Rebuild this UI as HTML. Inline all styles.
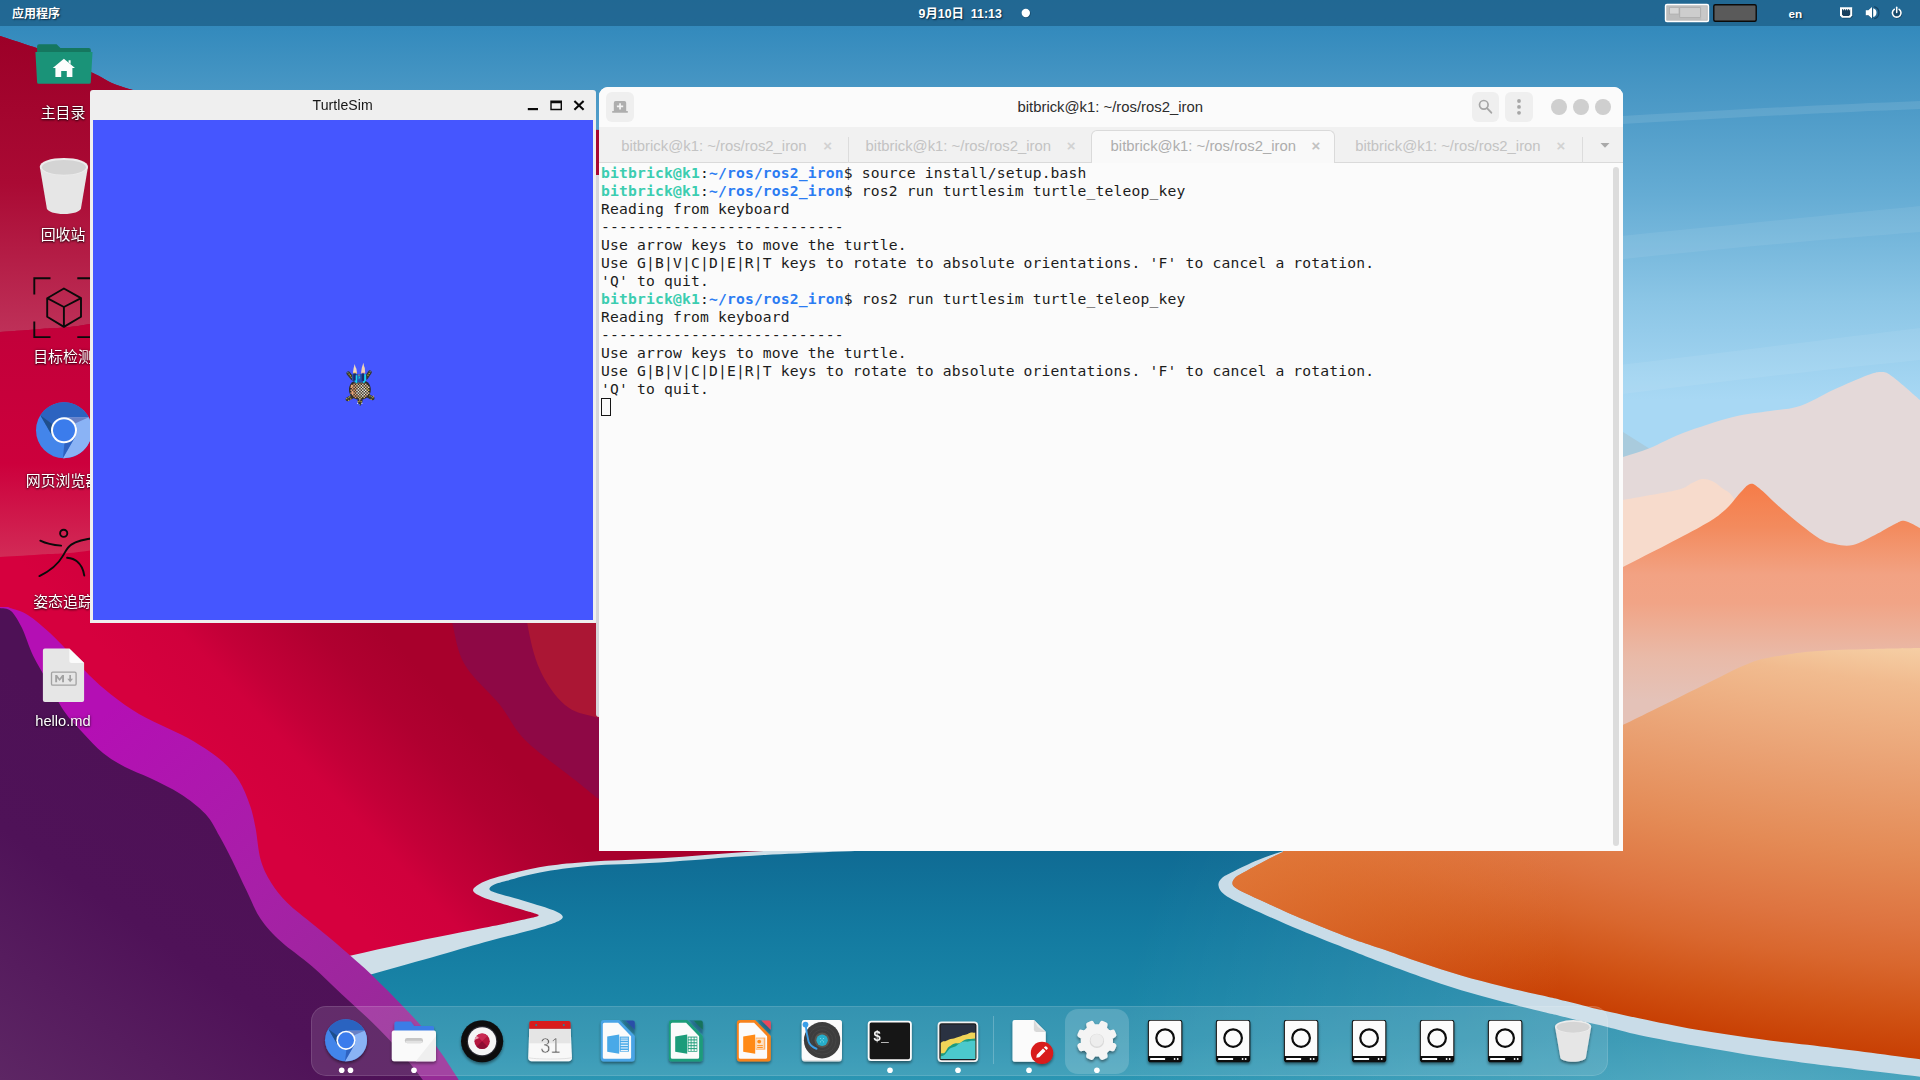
<!DOCTYPE html>
<html lang="zh-CN">
<head>
<meta charset="utf-8">
<title>Desktop</title>
<style>
html,body{margin:0;padding:0;}
body{width:1920px;height:1080px;overflow:hidden;position:relative;background:#358bbd;font-family:"Liberation Sans","Noto Sans CJK SC",sans-serif;}
.abs{position:absolute;}
#wall{position:absolute;left:0;top:0;width:1920px;height:1080px;display:block;}
/* top panel */
#panel{position:absolute;left:0;top:0;width:1920px;height:26px;background:rgba(32,100,142,0.88);color:#fff;font-weight:bold;font-size:12px;text-shadow:1px 1px 1.5px rgba(5,30,50,.85);}
#panel .t{position:absolute;top:2.400px;line-height:25px;white-space:nowrap;}
/* desktop icons */
.dlabel{will-change:transform;position:absolute;width:140px;text-align:center;color:#fff;font-size:14.900px;line-height:20px;white-space:nowrap;text-shadow:0 1px 2px rgba(0,0,0,.8),0 0 3px rgba(0,0,0,.45);}
/* turtlesim */
#tsim{position:absolute;left:90px;top:90px;width:506px;height:533px;background:#efefef;border-radius:3px 3px 0 0;overflow:hidden;}
#tsim .title{position:absolute;left:0;top:0;width:506px;height:30px;line-height:31px;font-size:14.100px;letter-spacing:0.050px;color:#161616;white-space:nowrap;}
#tsim .canvas{position:absolute;left:3px;top:30px;width:500px;height:500px;background:#4556ff;}
/* terminal */
#term{position:absolute;left:599px;top:87px;width:1024px;height:764px;background:#fbfbfb;border-radius:9px 9px 0 0;overflow:hidden;}
#term .hdr{position:absolute;left:0;top:0;width:1024px;height:40px;background:#fbfbfb;}
#term .hb{background:#efefef;border-radius:6px;}
#term .ttl{font-size:14.850px;line-height:40px;color:#2c2c2c;white-space:nowrap;}
#term .wc{width:15.800px;height:15.800px;border-radius:50%;background:#cfcfcf;}
#term .tabs{position:absolute;left:0;top:40px;width:1024px;height:36px;background:#f1f1f1;border-bottom:1px solid #dadada;box-sizing:border-box;}
#term .tt{top:0;line-height:39px;font-size:14.850px;color:#c3c3c3;white-space:nowrap;}
#term .tx{top:0;line-height:38px;font-size:15px;font-weight:bold;color:#d2d2d2;}
#term .tsep{top:10px;width:1px;height:26px;background:#dcdcdc;}
#term .atab{background:#f9f9f9;border:1px solid #dadada;border-bottom:none;border-radius:6px 6px 0 0;box-sizing:border-box;}
#term .body{position:absolute;left:0;top:76px;width:1024px;height:688px;background:#fbfbfb;}
#term pre{position:absolute;left:2px;top:1px;margin:0;font-family:"DejaVu Sans Mono","Liberation Mono",monospace;font-size:14.670px;line-height:18px;letter-spacing:0.168px;color:#1c1c1c;}
.g{color:#3ccdb0;font-weight:bold;}
.b{color:#2b7cf2;font-weight:bold;}
/* dock */
#dock{position:absolute;left:311px;top:1006px;width:1297px;height:70px;border-radius:15px;background:rgba(255,255,255,0.115);box-shadow:inset 0 0 0 1px rgba(255,255,255,0.12);}
</style>
</head>
<body>
<svg id="wall" viewBox="0 0 1920 1080" width="1920" height="1080">
<defs>
<linearGradient id="sky" x1="0" y1="0" x2="0" y2="1080" gradientUnits="userSpaceOnUse"><stop offset="0" stop-color="#2f82b5"/><stop offset="0.03" stop-color="#358bbd"/><stop offset="0.08" stop-color="#4796c4"/><stop offset="0.18" stop-color="#65acd4"/><stop offset="0.28" stop-color="#8cc6e6"/><stop offset="0.37" stop-color="#a8d8f4"/><stop offset="1" stop-color="#a8d8f4"/></linearGradient>
<linearGradient id="gpeak" x1="0" y1="484" x2="0" y2="700" gradientUnits="userSpaceOnUse"><stop offset="0" stop-color="#f67c48"/><stop offset="0.2" stop-color="#f38b5e"/><stop offset="0.42" stop-color="#f2a283"/><stop offset="0.55" stop-color="#f1a486"/><stop offset="0.8" stop-color="#e9baa8"/><stop offset="1" stop-color="#e4c2b8"/></linearGradient>
<radialGradient id="gdune" cx="2112" cy="-1354" r="2418" gradientUnits="userSpaceOnUse"><stop offset="0.8305" stop-color="#f6d0a6"/><stop offset="0.847" stop-color="#f1bb8f"/><stop offset="0.8821" stop-color="#eaa274"/><stop offset="0.9173" stop-color="#e48b56"/><stop offset="0.9462" stop-color="#de7440"/><stop offset="0.9628" stop-color="#d9672e"/><stop offset="0.9835" stop-color="#d05214"/><stop offset="1" stop-color="#c84004"/></radialGradient>
<linearGradient id="gdtip" x1="1230" y1="0" x2="1560" y2="0" gradientUnits="userSpaceOnUse"><stop offset="0" stop-color="#e88848" stop-opacity="0.7"/><stop offset="1" stop-color="#e88848" stop-opacity="0"/></linearGradient>
<linearGradient id="gwater" x1="0" y1="845" x2="0" y2="1080" gradientUnits="userSpaceOnUse"><stop offset="0" stop-color="#0f6a93"/><stop offset="0.36" stop-color="#137aa0"/><stop offset="0.66" stop-color="#1a85a7"/><stop offset="0.83" stop-color="#208cab"/><stop offset="1" stop-color="#2c96b3"/></linearGradient>
<radialGradient id="gwl" cx="1750" cy="1120" r="640" gradientUnits="userSpaceOnUse"><stop offset="0" stop-color="#fff" stop-opacity="0.18"/><stop offset="0.5" stop-color="#fff" stop-opacity="0.09"/><stop offset="1" stop-color="#fff" stop-opacity="0"/></radialGradient>
<linearGradient id="gred" x1="150" y1="701.6" x2="310.6" y2="551.3" gradientUnits="userSpaceOnUse"><stop offset="0" stop-color="#d6003e"/><stop offset="0.318" stop-color="#d0003c"/><stop offset="0.4545" stop-color="#c40038"/><stop offset="0.773" stop-color="#b00030"/><stop offset="1" stop-color="#a8002c"/></linearGradient>
<linearGradient id="gred1" x1="0" y1="36" x2="0" y2="330" gradientUnits="userSpaceOnUse"><stop offset="0" stop-color="#9c0028"/><stop offset="0.5" stop-color="#aa0a34"/><stop offset="1" stop-color="#be3058"/></linearGradient>
<linearGradient id="gred2" x1="0" y1="325" x2="0" y2="556" gradientUnits="userSpaceOnUse"><stop offset="0" stop-color="#c2003a"/><stop offset="0.6" stop-color="#cc003c"/><stop offset="1" stop-color="#d22a56"/></linearGradient>
<linearGradient id="gmag" x1="120" y1="700" x2="420" y2="1040" gradientUnits="userSpaceOnUse"><stop offset="0" stop-color="#b40fb4"/><stop offset="0.5" stop-color="#a81fa8"/><stop offset="1" stop-color="#962c96"/></linearGradient>
<linearGradient id="gpur" x1="0" y1="1080" x2="200" y2="800" gradientUnits="userSpaceOnUse"><stop offset="0" stop-color="#5d2664"/><stop offset="0.6" stop-color="#4f1258"/><stop offset="1" stop-color="#4e1156"/></linearGradient>
</defs>
<rect width="1920" height="1080" fill="url(#sky)"/>
<path d="M1560,120 C1700,111 1820,105 1920,101 L1920,109 C1820,113 1700,119 1560,128 Z" fill="#ffffff" opacity="0.10"/>
<path d="M1560,242 C1700,228 1820,216 1920,206 L1920,232 C1820,240 1700,250 1560,266 Z" fill="#ffffff" opacity="0.07"/>
<path d="M1560,372 C1700,356 1820,340 1920,328 L1920,360 C1820,370 1700,384 1560,402 Z" fill="#ffffff" opacity="0.07"/>
<path d="M1600,432 L1623,432 L1650,449 L1600,470 Z" fill="#a9cbdd"/>
<path d="M1560.0,475.0 C1566.7,473.3 1589.5,468.0 1600.0,465.0 C1610.5,462.0 1614.7,459.8 1623.0,457.0 C1631.3,454.2 1640.0,452.0 1650.0,448.0 C1660.0,444.0 1669.2,438.2 1683.0,433.0 C1696.8,427.8 1718.5,420.7 1733.0,417.0 C1747.5,413.3 1758.8,412.8 1770.0,411.0 C1781.2,409.2 1789.5,409.5 1800.0,406.0 C1810.5,402.5 1821.7,395.2 1833.0,390.0 C1844.3,384.8 1859.8,378.0 1868.0,375.0 C1876.2,372.0 1877.8,371.7 1882.0,372.0 C1886.2,372.3 1886.7,372.3 1893.0,377.0 C1899.3,381.7 1915.5,396.2 1920.0,400.0 L1920.0,720.0 L1560.0,720.0 Z" fill="#e4d9d9"/>
<path d="M1560.0,512.0 C1566.7,510.8 1589.5,507.0 1600.0,505.0 C1610.5,503.0 1610.2,502.5 1623.0,500.0 C1635.8,497.5 1665.5,492.8 1677.0,490.0 C1688.5,487.2 1687.8,484.8 1692.0,483.0 C1696.2,481.2 1698.7,479.3 1702.0,479.0 C1705.3,478.7 1708.7,479.5 1712.0,481.0 C1715.3,482.5 1718.0,484.5 1722.0,488.0 C1726.0,491.5 1729.7,490.0 1736.0,502.0 C1742.3,514.0 1756.0,550.3 1760.0,560.0 L1560.0,600.0 Z" fill="#f7dbcc"/>
<path d="M1560.0,598.0 C1566.7,594.7 1589.5,583.2 1600.0,578.0 C1610.5,572.8 1606.3,575.5 1623.0,567.0 C1639.7,558.5 1683.0,536.5 1700.0,527.0 C1717.0,517.5 1718.3,515.7 1725.0,510.0 C1731.7,504.3 1735.8,497.3 1740.0,493.0 C1744.2,488.7 1746.8,484.8 1750.0,484.0 C1753.2,483.2 1753.5,483.7 1759.0,488.0 C1764.5,492.3 1773.3,501.8 1783.0,510.0 C1792.7,518.2 1808.3,531.3 1817.0,537.0 C1825.7,542.7 1829.0,542.7 1835.0,544.0 C1841.0,545.3 1846.3,546.5 1853.0,545.0 C1859.7,543.5 1868.0,538.5 1875.0,535.0 C1882.0,531.5 1890.0,526.3 1895.0,524.0 C1900.0,521.7 1900.8,520.3 1905.0,521.0 C1909.2,521.7 1917.5,526.8 1920.0,528.0 L1920.0,760.0 L1560.0,760.0 Z" fill="url(#gpeak)"/>
<rect x="300" y="830" width="1620" height="250" fill="url(#gwater)"/>
<rect x="900" y="830" width="1020" height="250" fill="url(#gwl)"/>
<path d="M300.0,994.0 C311.9,990.7 348.4,980.7 371.7,974.2 C395.0,967.7 420.3,960.6 440.0,955.0 C459.7,949.4 474.7,945.0 490.0,940.8 C505.3,936.6 521.2,932.9 531.7,930.0 C542.2,927.1 548.4,925.0 553.3,923.3 C558.2,921.5 559.5,920.7 561.0,919.5 C562.5,918.3 563.2,917.3 562.5,916.0 C561.8,914.7 560.5,913.4 556.7,911.7 C553.0,910.0 547.0,908.0 540.0,905.8 C533.0,903.6 522.5,900.5 515.0,898.3 C507.5,896.1 499.2,894.0 495.0,892.5 C490.8,891.0 489.8,890.5 489.5,889.2 C489.2,888.0 490.4,886.4 493.3,885.0 C496.2,883.6 498.9,882.9 506.7,880.8 C514.5,878.7 526.1,875.0 540.0,872.5 C553.9,870.0 570.0,867.5 590.0,865.8 C610.0,864.1 630.8,864.3 660.0,862.5 C689.2,860.7 725.0,857.2 765.0,855.0 C805.0,852.8 860.8,850.7 900.0,849.5 C939.2,848.3 983.3,848.2 1000.0,848.0 L1000.0,600.0 L300.0,600.0 Z" fill="#cfdfe8"/>
<path d="M0.0,36.0 C8.3,38.8 34.5,46.8 50.0,53.0 C65.5,59.2 79.2,66.8 93.0,73.0 C106.8,79.2 106.8,83.0 133.0,90.0 C159.2,97.0 205.5,108.8 250.0,115.0 C294.5,121.2 341.7,124.5 400.0,127.0 C458.3,129.5 550.0,128.7 600.0,130.0 C650.0,131.3 683.3,134.2 700.0,135.0 L1000,135 L1000.0,844.0 C983.3,844.3 939.2,844.8 900.0,846.0 C860.8,847.2 805.0,849.0 765.0,851.0 C725.0,853.0 689.2,856.5 660.0,858.3 C630.8,860.1 608.6,860.5 590.0,861.7 C571.4,863.0 560.8,864.0 548.3,865.8 C535.8,867.6 524.7,870.3 515.0,872.5 C505.3,874.7 496.4,877.0 490.0,879.2 C483.6,881.4 479.5,883.8 476.7,885.8 C473.9,887.8 472.5,889.4 473.3,891.2 C474.1,893.0 477.5,894.8 481.7,896.7 C485.9,898.6 491.4,900.3 498.3,902.5 C505.2,904.7 517.2,908.2 523.3,910.0 C529.4,911.8 532.5,912.6 535.0,913.5 C537.5,914.4 539.1,914.7 538.6,915.4 C538.1,916.1 537.0,916.5 531.7,917.8 C526.4,919.1 516.4,921.3 506.7,923.3 C497.0,925.3 490.0,926.7 473.3,930.0 C456.6,933.3 427.2,939.0 406.7,943.3 C386.1,947.6 367.8,951.8 350.0,955.8 C332.2,959.8 308.3,965.1 300.0,967.0 L0.0,1080.0 L0.0,36.0 Z" fill="url(#gred)"/>
<path d="M0.0,36.0 C8.3,38.8 34.5,46.8 50.0,53.0 C65.5,59.2 79.2,66.8 93.0,73.0 C106.8,79.2 106.8,83.0 133.0,90.0 C159.2,97.0 205.5,108.8 250.0,115.0 C294.5,121.2 341.7,124.5 400.0,127.0 C458.3,129.5 550.0,128.7 600.0,130.0 C650.0,131.3 683.3,134.2 700.0,135.0 L700,170 L600.0,190.0 C566.7,198.3 466.7,221.7 400.0,240.0 C333.3,258.3 251.7,286.0 200.0,300.0 C148.3,314.0 116.7,319.2 90.0,324.0 C63.3,328.8 55.0,327.7 40.0,329.0 C25.0,330.3 6.7,331.5 0.0,332.0 Z" fill="url(#gred1)"/>
<path d="M0.0,332.0 C6.7,331.5 25.0,330.3 40.0,329.0 C55.0,327.7 63.3,328.8 90.0,324.0 C116.7,319.2 148.3,314.0 200.0,300.0 C251.7,286.0 366.7,250.0 400.0,240.0 L400.0,480.0 C366.7,488.3 251.7,518.2 200.0,530.0 C148.3,541.8 116.7,546.4 90.0,550.5 C63.3,554.6 55.0,553.4 40.0,554.5 C25.0,555.6 6.7,556.6 0.0,557.0 Z" fill="url(#gred2)"/>
<path d="M440.0,560.0 C442.0,570.3 447.8,604.5 452.0,622.0 C456.2,639.5 457.0,651.2 465.0,665.0 C473.0,678.8 490.0,692.5 500.0,705.0 C510.0,717.5 512.5,727.5 525.0,740.0 C537.5,752.5 562.5,770.0 575.0,780.0 C587.5,790.0 589.2,791.7 600.0,800.0 C610.8,808.3 633.3,825.0 640.0,830.0 L700.0,560.0 Z" fill="#8e0845"/>
<path d="M520.0,560.0 C521.2,570.3 523.7,603.7 527.0,622.0 C530.3,640.3 533.7,656.2 540.0,670.0 C546.3,683.8 555.8,697.2 565.0,705.0 C574.2,712.8 582.5,713.7 595.0,717.0 C607.5,720.3 632.5,723.7 640.0,725.0 L700.0,560.0 Z" fill="#ab1634"/>
<path d="M1920.0,1076.7 C1904.7,1074.9 1854.2,1069.1 1828.0,1065.8 C1801.8,1062.5 1784.3,1060.3 1762.5,1057.0 C1740.7,1053.7 1717.4,1049.6 1697.0,1046.0 C1676.6,1042.4 1655.0,1038.4 1640.0,1035.2 C1625.0,1032.0 1616.8,1029.3 1607.3,1027.0 C1597.8,1024.7 1591.0,1023.5 1583.1,1021.6 C1575.2,1019.8 1566.8,1017.5 1560.0,1015.9 C1553.2,1014.3 1552.2,1014.2 1542.5,1011.8 C1532.8,1009.4 1515.5,1005.2 1501.9,1001.6 C1488.4,998.0 1474.8,994.4 1461.2,990.3 C1447.7,986.1 1434.1,981.5 1420.6,976.7 C1407.1,972.0 1391.8,966.2 1380.0,961.8 C1368.2,957.3 1363.3,955.3 1350.0,950.0 C1336.7,944.7 1316.7,937.0 1300.0,930.0 C1283.3,923.0 1262.5,913.8 1250.0,908.0 C1237.5,902.2 1230.2,898.8 1225.0,895.0 C1219.8,891.2 1219.0,888.3 1218.5,885.5 C1218.0,882.7 1219.6,880.3 1222.0,878.0 C1224.4,875.7 1227.0,874.7 1233.0,871.7 C1239.0,868.7 1249.7,863.4 1258.0,860.0 C1266.3,856.6 1274.3,854.1 1283.0,851.3 C1291.7,848.5 1305.5,844.4 1310.0,843.0 L1920.0,843.0 Z" fill="#c9dce8"/>
<path d="M1283.0,851.0 C1302.5,843.3 1363.8,818.5 1400.0,805.0 C1436.2,791.5 1466.7,781.7 1500.0,770.0 C1533.3,758.3 1578.8,742.8 1600.0,735.0 C1621.2,727.2 1610.3,731.0 1627.0,723.0 C1643.7,715.0 1679.5,697.0 1700.0,687.0 C1720.5,677.0 1735.8,668.3 1750.0,663.0 C1764.2,657.7 1773.8,657.0 1785.0,655.0 C1796.2,653.0 1802.8,652.0 1817.0,651.0 C1831.2,650.0 1852.8,649.5 1870.0,649.0 C1887.2,648.5 1911.7,648.2 1920.0,648.0 L1920.0,1059.2 C1904.7,1057.2 1854.2,1050.5 1828.0,1047.2 C1801.8,1043.9 1784.3,1042.4 1762.5,1039.5 C1740.7,1036.6 1717.4,1033.2 1697.0,1029.7 C1676.6,1026.2 1656.3,1021.8 1640.0,1018.4 C1623.7,1015.0 1608.4,1011.6 1598.9,1009.4 C1589.4,1007.2 1589.6,1007.0 1583.1,1005.4 C1576.6,1003.8 1566.8,1001.3 1560.0,999.7 C1553.2,998.1 1552.2,997.9 1542.5,995.6 C1532.8,993.4 1515.5,989.6 1501.9,986.2 C1488.4,982.8 1474.8,979.4 1461.2,975.4 C1447.7,971.4 1434.1,967.0 1420.6,962.5 C1407.1,958.0 1391.8,952.4 1380.0,948.3 C1368.2,944.2 1363.3,943.0 1350.0,938.0 C1336.7,933.0 1313.9,923.8 1300.0,918.0 C1286.1,912.2 1275.9,907.2 1266.7,903.0 C1257.5,898.8 1250.4,895.7 1245.0,893.0 C1239.6,890.3 1236.6,888.8 1234.5,887.0 C1232.4,885.2 1232.4,884.0 1232.5,882.5 C1232.6,881.0 1233.5,879.5 1235.0,878.0 C1236.5,876.5 1236.4,876.5 1241.7,873.5 C1247.0,870.5 1259.8,863.6 1266.7,860.0 C1273.6,856.4 1280.3,853.3 1283.0,852.0 Z" fill="url(#gdune)"/>
<path d="M1283.0,851.0 C1302.5,843.3 1363.8,818.5 1400.0,805.0 C1436.2,791.5 1466.7,781.7 1500.0,770.0 C1533.3,758.3 1578.8,742.8 1600.0,735.0 C1621.2,727.2 1610.3,731.0 1627.0,723.0 C1643.7,715.0 1679.5,697.0 1700.0,687.0 C1720.5,677.0 1735.8,668.3 1750.0,663.0 C1764.2,657.7 1773.8,657.0 1785.0,655.0 C1796.2,653.0 1802.8,652.0 1817.0,651.0 C1831.2,650.0 1852.8,649.5 1870.0,649.0 C1887.2,648.5 1911.7,648.2 1920.0,648.0 L1920.0,1059.2 C1904.7,1057.2 1854.2,1050.5 1828.0,1047.2 C1801.8,1043.9 1784.3,1042.4 1762.5,1039.5 C1740.7,1036.6 1717.4,1033.2 1697.0,1029.7 C1676.6,1026.2 1656.3,1021.8 1640.0,1018.4 C1623.7,1015.0 1608.4,1011.6 1598.9,1009.4 C1589.4,1007.2 1589.6,1007.0 1583.1,1005.4 C1576.6,1003.8 1566.8,1001.3 1560.0,999.7 C1553.2,998.1 1552.2,997.9 1542.5,995.6 C1532.8,993.4 1515.5,989.6 1501.9,986.2 C1488.4,982.8 1474.8,979.4 1461.2,975.4 C1447.7,971.4 1434.1,967.0 1420.6,962.5 C1407.1,958.0 1391.8,952.4 1380.0,948.3 C1368.2,944.2 1363.3,943.0 1350.0,938.0 C1336.7,933.0 1313.9,923.8 1300.0,918.0 C1286.1,912.2 1275.9,907.2 1266.7,903.0 C1257.5,898.8 1250.4,895.7 1245.0,893.0 C1239.6,890.3 1236.6,888.8 1234.5,887.0 C1232.4,885.2 1232.4,884.0 1232.5,882.5 C1232.6,881.0 1233.5,879.5 1235.0,878.0 C1236.5,876.5 1236.4,876.5 1241.7,873.5 C1247.0,870.5 1259.8,863.6 1266.7,860.0 C1273.6,856.4 1280.3,853.3 1283.0,852.0 Z" fill="url(#gdtip)"/>
<path d="M8.0,607.0 C8.5,607.2 7.7,607.0 11.0,608.3 C14.3,609.6 21.3,610.9 27.8,615.0 C34.3,619.1 42.6,626.2 50.0,633.0 C57.4,639.8 65.5,648.5 72.0,655.5 C78.5,662.5 82.5,668.5 89.0,675.0 C95.5,681.5 102.7,687.9 111.0,694.4 C119.3,700.9 129.7,708.4 139.0,714.0 C148.3,719.6 157.5,723.2 166.7,727.8 C175.9,732.4 185.2,736.2 194.4,741.7 C203.6,747.2 214.6,754.5 222.0,761.0 C229.4,767.5 234.3,773.1 239.0,780.5 C243.7,787.9 247.2,797.6 250.0,805.5 C252.8,813.4 253.7,818.7 255.5,827.8 C257.3,836.9 258.1,850.9 260.7,860.0 C263.3,869.1 266.6,875.3 271.0,882.4 C275.4,889.5 280.4,896.0 287.2,902.8 C294.0,909.6 303.9,916.8 311.7,923.2 C319.5,929.7 327.6,936.1 334.0,941.5 C340.4,946.9 344.3,950.4 350.4,955.8 C356.5,961.2 362.0,965.5 370.8,974.0 C379.6,982.5 394.6,997.5 403.4,1006.7 C412.2,1015.9 417.3,1021.2 423.7,1029.0 C430.1,1036.8 435.4,1044.8 441.5,1053.6 C447.6,1062.4 456.9,1077.3 460.0,1082.0 L0.0,1082.0 L0.0,607.0 Z" fill="url(#gmag)"/>
<path d="M0.0,608.0 C1.8,608.5 7.3,607.7 11.0,611.0 C14.7,614.3 18.3,620.6 22.0,628.0 C25.7,635.4 28.8,646.8 33.0,655.5 C37.2,664.2 41.8,671.2 47.0,680.5 C52.2,689.8 58.0,702.2 64.0,711.0 C70.0,719.8 76.5,726.0 83.0,733.0 C89.5,740.0 96.0,747.3 103.0,753.0 C110.0,758.7 117.2,762.8 125.0,767.0 C132.8,771.2 140.8,773.5 150.0,778.0 C159.2,782.5 171.2,788.0 180.5,794.0 C189.8,800.0 199.0,807.0 205.5,814.0 C212.0,821.0 215.0,828.3 219.4,836.0 C223.8,843.7 227.5,850.9 232.0,860.0 C236.5,869.1 241.7,880.8 246.5,890.6 C251.3,900.4 254.9,910.5 260.7,919.0 C266.4,927.5 272.5,933.7 281.0,941.5 C289.5,949.3 301.5,957.2 311.7,966.0 C321.9,974.8 331.8,985.0 342.0,994.5 C352.2,1004.0 362.8,1013.1 372.8,1023.0 C382.8,1032.8 393.2,1043.8 401.8,1053.6 C410.4,1063.4 420.7,1077.3 424.5,1082.0 L0.0,1082.0 Z" fill="url(#gpur)"/>
</svg>
<!-- ===== top panel ===== -->
<div id="panel">
<span class="t" style="left:12px;">应用程序</span>
<span class="t" style="left:918.500px;font-size:12.400px;">9月10日&nbsp; 11:13</span>
<span class="t" style="left:1788.600px;font-size:11.700px;top:0.500px;">en</span>
<svg class="abs" style="left:1018px;top:5px" width="16" height="16" viewBox="0 0 16 16"><circle cx="8.300" cy="8.600" r="4.500" fill="#0d2f48" opacity=".5"/><circle cx="7.800" cy="8" r="4.200" fill="#fff"/></svg>
<!-- workspace switcher -->
<svg class="abs" style="left:1660px;top:0" width="110" height="26" viewBox="1660 0 110 26">
<rect x="1665.5" y="4.5" width="43" height="17" rx="1.5" fill="#bcbcbc" stroke="#fff" stroke-width="1.4"/>
<rect x="1669.7" y="7.7" width="9.3" height="6.3" fill="#d6d6d6" stroke="#a8a8a8" stroke-width=".6"/>
<rect x="1679.8" y="7.7" width="20.8" height="9.9" fill="#cdcdcd" stroke="#a4a4a4" stroke-width=".6"/>
<rect x="1701.2" y="6.2" width="5.5" height="13.6" fill="#c8c8c8"/>
<rect x="1713.8" y="4.7" width="42.4" height="16.6" rx="1.5" fill="#5a5a5a" stroke="#0a0a0a" stroke-width="1.4"/>
</svg>
<!-- network / volume / power -->
<svg class="abs" style="left:1836px;top:0" width="72" height="26" viewBox="1836 0 72 26">
<g fill="#0d2f48" opacity=".55" transform="translate(.6,.9)">
<path d="M1840,7.3h12.2v8.2l-2,2.2h-8.2l-2,-2.2z"/><path d="M1865.8,10.2h2.6l3.6,-3.2v11.4l-3.6,-3.2h-2.6z"/><circle cx="1896.7" cy="12.9" r="4.9"/>
</g>
<path d="M1840,7.3h12.2v8.2l-2,2.2h-8.2l-2,-2.2z" fill="#fff"/>
<path d="M1842,9.2h1l.5,1.5.5,-1.5h1l.5,1.5.5,-1.5h1l.5,1.5.5,-1.5h1l.5,1.5.5,-1.5h.2v5.6l-1.3,1.3h-5.6l-1.3,-1.3z" fill="#17405f"/>
<path d="M1865.8,10.2h2.6l3.6,-3.2v11.4l-3.6,-3.2h-2.6z" fill="#fff"/>
<path d="M1873.2,8.3a4.6,4.6 0 0 1 0,8.8z" fill="#fff"/>
<path d="M1874.2,6.6a6.3,6.3 0 0 1 0,12.2" fill="none" stroke="#123a58" stroke-width="1.1" opacity=".8"/>
<path d="M1894.3,9.3a4.3,4.3 0 1 0 4.8,0" fill="none" stroke="#fff" stroke-width="1.6" stroke-linecap="round"/>
<path d="M1896.7,7.2v5.3" stroke="#fff" stroke-width="1.5" stroke-linecap="round"/>
</svg>
</div>

<!-- ===== desktop icons ===== -->
<svg class="abs" style="left:20px;top:36px" width="90" height="680" viewBox="20 36 90 680">
<!-- home folder -->
<path d="M37.1,46.2a2,2 0 0 1 2,-2h17.5l3.8,3.7h28.4a2,2 0 0 1 2,2v8h-53.7z" fill="#15775f"/>
<path d="M35.4,52.1h57.1l-1.7,30.1a1.6,1.6 0 0 1 -1.6,1.5h-50.5a1.6,1.6 0 0 1 -1.6,-1.5z" fill="#1a9378"/>
<path d="M63.9,58.7l11.1,9.4h-2.6v8.9h-5.6v-6h-5.6v6h-5.8v-8.9h-2.6zM68.6,60.3h2v3.6l-2,-1.7z" fill="#fdfdfd"/>
<!-- trash -->
<path d="M39.8,166.7l7,41.5c0.6,3.4 8,5.8 17.1,5.8s16.5,-2.4 17.1,-5.8l7,-41.5z" fill="#e6e6e6"/>
<ellipse cx="63.9" cy="166.7" rx="24.1" ry="8.8" fill="#ececec"/>
<ellipse cx="63.9" cy="167.3" rx="22" ry="7.4" fill="#d4d4d4"/>
<!-- object detection -->
<g fill="none" stroke="#0a0a0a" stroke-width="1.900" stroke-linejoin="miter">
<path d="M50.5,278.3h-16.2v16.2M34.3,321.4v15.7h16.2M77.3,278.3h16.2v16.2M93.5,321.4v15.7h-16.2"/>
<path d="M63.9,288.5l17.1,9.7v18.6l-17.1,10.1l-16.7,-10.1v-18.6zM47.2,298.2l16.7,8.8l17.1,-8.8M63.9,307v19.9" stroke-linejoin="round"/>
</g>
<!-- pose -->
<g fill="none" stroke="#0a0a0a" stroke-width="1.900" stroke-linecap="round">
<circle cx="63.7" cy="533.3" r="3.6"/>
<path d="M40.3,540.7c6,3 13,4.4 20.8,4.9"/>
<path d="M96,537.8c-10,1.2 -19,3 -24.7,6.8c-4.5,3 -6,7.500 -8.6,11.5c-4.500,8 -12,14.500 -23.300,20"/>
<path d="M67.1,557.8c4,0.500 7.500,1.500 9.800,3.500c4.500,3.700 6.500,8.500 7.400,14.300"/>
</g>
<!-- hello.md -->
<path d="M44.9,648.5h24.4l14.800,14.600v36.800a2,2 0 0 1 -2,2h-37.200a2,2 0 0 1 -2,-2v-49.400a2,2 0 0 1 2,-2z" fill="#e6e6e6"/>
<path d="M69.3,648.5l14.800,14.600h-12.300a2.500,2.500 0 0 1 -2.500,-2.500z" fill="#fbfbfb"/>
<rect x="51.500" y="672.100" width="24.600" height="13.100" rx="1.300" fill="none" stroke="#a2a2a2" stroke-width="1.300"/>
<path d="M55.2,682.300v-7.200h1.900l2.500,3.300l2.500,-3.300h1.900v7.200h-1.900v-4.300l-2.500,3.100l-2.500,-3.100v4.300z" fill="#a2a2a2"/>
<path d="M69.300,675.100h1.700v3.700h2l-2.850,3.500l-2.850,-3.500h2z" fill="#a2a2a2"/>
</svg>
<svg class="abs" style="left:35px;top:401px" width="60" height="60" viewBox="-29 -29.300 60 60"><g><circle r="28" fill="#4385ea"/><path d="M-23.66,-14.98 L-11.26,6.50 A13,13 0 0 1 0.00,-13.00 L24.80,-13.00 A28,28 0 0 0 -23.66,-14.98 Z" fill="#2c63c0"/><path d="M24.80,-13.00 L0.00,-13.00 A13,13 0 0 1 11.26,6.50 L-1.14,27.98 A28,28 0 0 0 24.80,-13.00 Z" fill="#8ab3f5"/><path d="M0.00,-13.00 L24.80,-13.00 L11.02,-6.89 Z" fill="#6881c6"/><path d="M11.26,6.50 L-1.14,27.98 L0.45,12.99 Z" fill="#2f62c0"/><path d="M-11.26,6.50 L-23.66,-14.98 L-11.48,-6.10 Z" fill="#1f4f8c"/><circle r="13" fill="#fdfdfd"/><circle r="11" fill="#3b7cec"/></g></svg>
<div class="dlabel" style="left:-6.600px;top:102.500px;">主目录</div>
<div class="dlabel" style="left:-6.600px;top:225px;">回收站</div>
<div class="dlabel" style="left:-6.600px;top:346.500px;">目标检测</div>
<div class="dlabel" style="left:-6.600px;top:470.500px;">网页浏览器</div>
<div class="dlabel" style="left:-6.600px;top:591.500px;">姿态追踪</div>
<div class="dlabel" style="left:-6.600px;top:710.500px;font-size:14.670px;">hello.md</div>
<!-- ===== TurtleSim window ===== -->
<div class="abs" style="left:596px;top:175px;width:3px;height:542px;background:#d6d6da;border-radius:0 0 0 3px;"></div>
<div id="tsim">
<div class="title"><span class="abs" style="left:222.500px;top:0;">TurtleSim</span></div>
<svg class="abs" style="left:430px;top:6px" width="74" height="20" viewBox="520 96 74 20">
<rect x="527.800" y="108" width="10.200" height="2.200" fill="#0a0a0a"/>
<path d="M550.300,100.600h11.700v9.600h-11.700zM551.700,103.200v5.600h8.900v-5.600z" fill="#0a0a0a" fill-rule="evenodd"/>
<path d="M574.400,101l9.200,8.700M583.600,101l-9.200,8.700" stroke="#0a0a0a" stroke-width="2.100" fill="none"/>
</svg>
<div class="canvas">
<svg class="abs" style="left:250px;top:240px" width="36" height="50" viewBox="343 360 36 50">
<path d="M352.900,373.200l0.700,-5l1.100,-4.300l0.800,3l0.900,1.800l0.600,4.500z" fill="#f2d8bc"/>
<path d="M361,373.200l0.800,-5.500l1.600,-4.900l0.600,3.200l0.800,2l0.400,5.200z" fill="#f0d2b4"/>
<rect x="353.100" y="372.300" width="3.600" height="1.200" fill="#e8c25a"/><rect x="361.200" y="372.300" width="3.700" height="1.200" fill="#e2a8a0"/>
<path d="M348.3,373.3L352.6,378.6" stroke="#35352f" stroke-width="3.8" stroke-linecap="round"/>
<path d="M369.9,372.3L366.2,377.8" stroke="#35352f" stroke-width="3.8" stroke-linecap="round"/>
<path d="M347.6,399.2L353.0,396.2" stroke="#35352f" stroke-width="4.0" stroke-linecap="round"/>
<path d="M372.6,398.2L367.4,395.4" stroke="#35352f" stroke-width="4.0" stroke-linecap="round"/>
<path d="M357.400,399.600h5.400l-0.800,3.600l-1.900,2.700l-1.900,-2.700z" fill="#35352f"/>
<rect x="347.3" y="372.1" width="1.100" height="1.100" fill="#6a94a8"/>
<rect x="348.6" y="373.6" width="1.100" height="1.100" fill="#d6bf3e"/>
<rect x="349.8" y="375.2" width="1.100" height="1.100" fill="#d6bf3e"/>
<rect x="350.9" y="376.8" width="1.100" height="1.100" fill="#8a8a60"/>
<rect x="369.6" y="371.2" width="1.100" height="1.100" fill="#6a94a8"/>
<rect x="368.6" y="372.9" width="1.100" height="1.100" fill="#d6bf3e"/>
<rect x="367.4" y="374.6" width="1.100" height="1.100" fill="#d6bf3e"/>
<rect x="346.2" y="398.1" width="1.100" height="1.100" fill="#d6bf3e"/>
<rect x="347.8" y="397.1" width="1.100" height="1.100" fill="#6a94a8"/>
<rect x="349.2" y="396.3" width="1.100" height="1.100" fill="#d6bf3e"/>
<rect x="348.1" y="399.8" width="1.100" height="1.100" fill="#d6bf3e"/>
<rect x="350.2" y="398.4" width="1.100" height="1.100" fill="#e8a070"/>
<rect x="372.3" y="397.1" width="1.100" height="1.100" fill="#d6bf3e"/>
<rect x="370.8" y="396.1" width="1.100" height="1.100" fill="#6a94a8"/>
<rect x="369.3" y="395.3" width="1.100" height="1.100" fill="#d6bf3e"/>
<rect x="370.6" y="398.8" width="1.100" height="1.100" fill="#d6bf3e"/>
<rect x="372.8" y="395.6" width="1.100" height="1.100" fill="#e8a070"/>
<rect x="357.6" y="401.1" width="1.100" height="1.100" fill="#d6bf3e"/>
<rect x="360.6" y="401.1" width="1.100" height="1.100" fill="#d6bf3e"/>
<rect x="357.1" y="402.8" width="1.100" height="1.100" fill="#e8f0f8"/>
<rect x="361.3" y="402.8" width="1.100" height="1.100" fill="#e8f0f8"/>
<rect x="359.1" y="404.1" width="1.100" height="1.100" fill="#6a94a8"/>
<rect x="359.1" y="400.4" width="1.100" height="1.100" fill="#e8a070"/>
<ellipse cx="359.9" cy="389.7" rx="10.9" ry="10.4" fill="#2c2b27"/>
<rect x="356.25" y="380.75" width="1.50" height="1.50" fill="#6a6648"/>
<rect x="359.15" y="380.75" width="1.50" height="1.50" fill="#d6bf3e"/>
<rect x="362.05" y="380.75" width="1.50" height="1.50" fill="#c9b27a"/>
<rect x="354.80" y="382.20" width="1.50" height="1.50" fill="#8a8152"/>
<rect x="357.70" y="382.20" width="1.50" height="1.50" fill="#8a8152"/>
<rect x="360.60" y="382.20" width="1.50" height="1.50" fill="#8a8152"/>
<rect x="363.50" y="382.20" width="1.50" height="1.50" fill="#6a6648"/>
<rect x="353.35" y="383.65" width="1.50" height="1.50" fill="#e49a6c"/>
<rect x="356.25" y="383.65" width="1.50" height="1.50" fill="#e8c9a0"/>
<rect x="359.15" y="383.65" width="1.50" height="1.50" fill="#eba879"/>
<rect x="362.05" y="383.65" width="1.50" height="1.50" fill="#e8c9a0"/>
<rect x="364.95" y="383.65" width="1.50" height="1.50" fill="#e8c9a0"/>
<rect x="351.90" y="385.10" width="1.50" height="1.50" fill="#eba879"/>
<rect x="354.80" y="385.10" width="1.50" height="1.50" fill="#f0b488"/>
<rect x="357.70" y="385.10" width="1.50" height="1.50" fill="#f0d8b8"/>
<rect x="360.60" y="385.10" width="1.50" height="1.50" fill="#f3ecdc"/>
<rect x="363.50" y="385.10" width="1.50" height="1.50" fill="#e8c9a0"/>
<rect x="366.40" y="385.10" width="1.50" height="1.50" fill="#e8c9a0"/>
<rect x="350.45" y="386.55" width="1.50" height="1.50" fill="#e49a6c"/>
<rect x="353.35" y="386.55" width="1.50" height="1.50" fill="#f0b488"/>
<rect x="356.25" y="386.55" width="1.50" height="1.50" fill="#e8c9a0"/>
<rect x="359.15" y="386.55" width="1.50" height="1.50" fill="#e9dcc4"/>
<rect x="362.05" y="386.55" width="1.50" height="1.50" fill="#f3ecdc"/>
<rect x="364.95" y="386.55" width="1.50" height="1.50" fill="#e8c9a0"/>
<rect x="367.85" y="386.55" width="1.50" height="1.50" fill="#f0d8b8"/>
<rect x="351.90" y="388.00" width="1.50" height="1.50" fill="#e49a6c"/>
<rect x="354.80" y="388.00" width="1.50" height="1.50" fill="#e49a6c"/>
<rect x="357.70" y="388.00" width="1.50" height="1.50" fill="#f3ecdc"/>
<rect x="360.60" y="388.00" width="1.50" height="1.50" fill="#e9dcc4"/>
<rect x="363.50" y="388.00" width="1.50" height="1.50" fill="#e9dcc4"/>
<rect x="366.40" y="388.00" width="1.50" height="1.50" fill="#d9c060"/>
<rect x="350.45" y="389.45" width="1.50" height="1.50" fill="#eba879"/>
<rect x="353.35" y="389.45" width="1.50" height="1.50" fill="#eba879"/>
<rect x="356.25" y="389.45" width="1.50" height="1.50" fill="#f3ecdc"/>
<rect x="359.15" y="389.45" width="1.50" height="1.50" fill="#e9dcc4"/>
<rect x="362.05" y="389.45" width="1.50" height="1.50" fill="#f3ecdc"/>
<rect x="364.95" y="389.45" width="1.50" height="1.50" fill="#f6f0e4"/>
<rect x="367.85" y="389.45" width="1.50" height="1.50" fill="#d9c060"/>
<rect x="351.90" y="390.90" width="1.50" height="1.50" fill="#eba879"/>
<rect x="354.80" y="390.90" width="1.50" height="1.50" fill="#e49a6c"/>
<rect x="357.70" y="390.90" width="1.50" height="1.50" fill="#f3ecdc"/>
<rect x="360.60" y="390.90" width="1.50" height="1.50" fill="#e9dcc4"/>
<rect x="363.50" y="390.90" width="1.50" height="1.50" fill="#f6f0e4"/>
<rect x="366.40" y="390.90" width="1.50" height="1.50" fill="#f0d8b8"/>
<rect x="350.45" y="392.35" width="1.50" height="1.50" fill="#e49a6c"/>
<rect x="353.35" y="392.35" width="1.50" height="1.50" fill="#eba879"/>
<rect x="356.25" y="392.35" width="1.50" height="1.50" fill="#f3ecdc"/>
<rect x="359.15" y="392.35" width="1.50" height="1.50" fill="#e9dcc4"/>
<rect x="362.05" y="392.35" width="1.50" height="1.50" fill="#e9dcc4"/>
<rect x="364.95" y="392.35" width="1.50" height="1.50" fill="#e9dcc4"/>
<rect x="367.85" y="392.35" width="1.50" height="1.50" fill="#e8c9a0"/>
<rect x="351.90" y="393.80" width="1.50" height="1.50" fill="#f0b488"/>
<rect x="354.80" y="393.80" width="1.50" height="1.50" fill="#eba879"/>
<rect x="357.70" y="393.80" width="1.50" height="1.50" fill="#e9dcc4"/>
<rect x="360.60" y="393.80" width="1.50" height="1.50" fill="#e9dcc4"/>
<rect x="363.50" y="393.80" width="1.50" height="1.50" fill="#f3ecdc"/>
<rect x="366.40" y="393.80" width="1.50" height="1.50" fill="#f0d8b8"/>
<rect x="353.35" y="395.25" width="1.50" height="1.50" fill="#eba879"/>
<rect x="356.25" y="395.25" width="1.50" height="1.50" fill="#eba879"/>
<rect x="359.15" y="395.25" width="1.50" height="1.50" fill="#e8c9a0"/>
<rect x="362.05" y="395.25" width="1.50" height="1.50" fill="#f6f0e4"/>
<rect x="364.95" y="395.25" width="1.50" height="1.50" fill="#eba879"/>
<rect x="354.80" y="396.70" width="1.50" height="1.50" fill="#e49a6c"/>
<rect x="357.70" y="396.70" width="1.50" height="1.50" fill="#c9b27a"/>
<rect x="360.60" y="396.70" width="1.50" height="1.50" fill="#c9b27a"/>
<rect x="363.50" y="396.70" width="1.50" height="1.50" fill="#c9b27a"/>
<rect x="359.15" y="398.15" width="1.50" height="1.50" fill="#e8c9a0"/>
<path d="M350.800,385l1.600,-0.400l0.400,3l-1.500,0.300zM351.400,391l1.700,-0.200l0.500,3l-1.400,0.200z" fill="#eba879"/>
<path d="M352.300,374h13.900l0.400,5.400l-2.200,3h-10.400l-2.100,-3z" fill="#2553b0"/>
<rect x="353.300" y="373.400" width="2.600" height="7.400" fill="#1a2c6a"/><rect x="361.700" y="373.400" width="2.500" height="7.400" fill="#1a2c6a"/>
<path d="M355.700,375.200h1.500v8.200c-1.300,-0.300 -2.200,-1.500 -2.700,-2.800h1.200z" fill="#17d2f2"/><path d="M364.200,374.200h1.800v6c-0.500,1.600 -1.500,2.600 -3,3l0.200,-2.200h1z" fill="#17d2f2"/>
<path d="M358.600,375.600l1.700,1.800l-1.700,2.200z" fill="#19c4d8"/><rect x="358.300" y="374.600" width="1.400" height="1" fill="#e8a070"/>
</svg>
</div>
</div>

<!-- ===== Terminal window ===== -->
<div id="term">
<div class="hdr">
<div class="abs hb" style="left:7px;top:5px;width:28px;height:30px;"></div>
<svg class="abs" style="left:12px;top:13px" width="18" height="14" viewBox="611 100 18 14"><path d="M612.200,112.800v-1.700h1.600v-8.200a1.800,1.800 0 0 1 1.800,-1.800h8.800a1.800,1.800 0 0 1 1.800,1.800v8.200h1.600v1.700z" fill="#aeaeae"/><path d="M619.200,103.300h1.700v2.300h2.300v1.700h-2.300v2.300h-1.700v-2.300h-2.300v-1.700h2.300z" fill="#f4f4f4"/></svg>
<div class="abs ttl" style="left:418.500px;top:0;">bitbrick@k1: ~/ros/ros2_iron</div>
<div class="abs hb" style="left:872.500px;top:5.200px;width:27.500px;height:29.500px;"></div>
<div class="abs hb" style="left:906.300px;top:5.200px;width:27.500px;height:29.500px;"></div>
<svg class="abs" style="left:872px;top:5px" width="64" height="30" viewBox="1471 92 64 30">
<circle cx="1483.800" cy="104.800" r="4.300" fill="none" stroke="#a6a6a6" stroke-width="1.700"/><path d="M1487,108.200l4.300,4.500" stroke="#a6a6a6" stroke-width="1.900" stroke-linecap="round"/>
<circle cx="1519" cy="101" r="1.900" fill="#a6a6a6"/><circle cx="1519" cy="106.900" r="1.900" fill="#a6a6a6"/><circle cx="1519" cy="112.800" r="1.900" fill="#a6a6a6"/>
</svg>
<div class="abs wc" style="left:952.200px;top:11.900px;"></div>
<div class="abs wc" style="left:974.100px;top:11.900px;"></div>
<div class="abs wc" style="left:996.100px;top:11.900px;"></div>
</div>
<div class="tabs">
<div class="abs atab" style="left:492.300px;top:3.200px;width:244px;height:33px;"></div>
<span class="abs tt" style="left:22.200px;">bitbrick@k1: ~/ros/ros2_iron</span><span class="abs tx" style="left:224.300px;">×</span>
<div class="abs tsep" style="left:248.500px;"></div>
<span class="abs tt" style="left:266.600px;">bitbrick@k1: ~/ros/ros2_iron</span><span class="abs tx" style="left:467.800px;">×</span>
<span class="abs tt" style="left:511.600px;color:#adadad;">bitbrick@k1: ~/ros/ros2_iron</span><span class="abs tx" style="left:712.500px;color:#c2c2c2;">×</span>
<span class="abs tt" style="left:756.200px;">bitbrick@k1: ~/ros/ros2_iron</span><span class="abs tx" style="left:957.500px;">×</span>
<div class="abs tsep" style="left:982.500px;"></div>
<svg class="abs" style="left:1000px;top:14px" width="12" height="8" viewBox="0 0 12 8"><path d="M1.500,2h9l-4.500,4.700z" fill="#a9a9a9"/></svg>
</div>
<div class="body"><pre><span class="g">bitbrick@k1</span>:<span class="b">~/ros/ros2_iron</span>$ source install/setup.bash
<span class="g">bitbrick@k1</span>:<span class="b">~/ros/ros2_iron</span>$ ros2 run turtlesim turtle_teleop_key
Reading from keyboard
---------------------------
Use arrow keys to move the turtle.
Use G|B|V|C|D|E|R|T keys to rotate to absolute orientations. 'F' to cancel a rotation.
'Q' to quit.
<span class="g">bitbrick@k1</span>:<span class="b">~/ros/ros2_iron</span>$ ros2 run turtlesim turtle_teleop_key
Reading from keyboard
---------------------------
Use arrow keys to move the turtle.
Use G|B|V|C|D|E|R|T keys to rotate to absolute orientations. 'F' to cancel a rotation.
'Q' to quit.
</pre>
<div class="abs" style="left:1.500px;top:234.500px;width:8px;height:16.500px;border:1px solid #151515;"></div>
<div class="abs" style="left:1014px;top:4px;width:5.500px;height:679px;background:#dcdcdc;border-radius:3px;"></div>
</div>
</div>
<div id="dock"></div>
<div class="abs" style="left:1065px;top:1009px;width:64px;height:64.500px;border-radius:13px;background:rgba(255,255,255,0.17);"></div>
<svg class="abs" style="left:311px;top:1006px" width="1297" height="74" viewBox="311 1006 1297 74">
<defs><filter id="ds" x="-20%" y="-20%" width="140%" height="150%"><feGaussianBlur in="SourceAlpha" stdDeviation="1.600"/><feOffset dy="1.500"/><feComponentTransfer><feFuncA type="linear" slope="0.450"/></feComponentTransfer><feMerge><feMergeNode/><feMergeNode in="SourceGraphic"/></feMerge></filter></defs>
<circle cx="341.7" cy="1070.300" r="2.800" fill="#fff"/>
<circle cx="350.5" cy="1070.300" r="2.800" fill="#fff"/>
<circle cx="414" cy="1070.300" r="2.800" fill="#fff"/>
<circle cx="890" cy="1070.300" r="2.800" fill="#fff"/>
<circle cx="958" cy="1070.300" r="2.800" fill="#fff"/>
<circle cx="1029" cy="1070.300" r="2.800" fill="#fff"/>
<circle cx="1096.9" cy="1070.300" r="2.800" fill="#fff"/>
<g filter="url(#ds)">
<g transform="translate(346,1040.300)"><g><circle r="21" fill="#4385ea"/><path d="M-17.65,-11.37 L-8.31,4.80 A9.6,9.6 0 0 1 0.00,-9.60 L18.68,-9.60 A21,21 0 0 0 -17.65,-11.37 Z" fill="#2c63c0"/><path d="M18.68,-9.60 L0.00,-9.60 A9.6,9.6 0 0 1 8.31,4.80 L-1.02,20.97 A21,21 0 0 0 18.68,-9.60 Z" fill="#8ab3f5"/><path d="M0.00,-9.60 L18.68,-9.60 L8.14,-5.09 Z" fill="#6881c6"/><path d="M8.31,4.80 L-1.02,20.97 L0.34,9.59 Z" fill="#2f62c0"/><path d="M-8.31,4.80 L-17.65,-11.37 L-8.48,-4.51 Z" fill="#1f4f8c"/><circle r="9.6" fill="#fdfdfd"/><circle r="8" fill="#3b7cec"/></g></g>
<path d="M394.400,1023.500a2,2 0 0 1 2,-2h14.500l3.300,4.500h18a1.800,1.800 0 0 1 1.800,1.800v5h-39.600z" fill="#3b7de6"/>
<rect x="391.800" y="1030.600" width="44.200" height="30.600" rx="2.200" fill="#fafafa"/>
<path d="M436,1036v23a2.200,2.200 0 0 1 -2.200,2.200h-18z" fill="#efefef"/>
<rect x="404.800" y="1038" width="18.200" height="5.200" rx="2.400" fill="#c6c6c6"/><rect x="405.600" y="1040.800" width="16.600" height="2.300" rx="1.100" fill="#e2e2e2"/>
<circle cx="482.100" cy="1041.250" r="21.100" fill="#0b0b0c"/><circle cx="482.100" cy="1041.250" r="15.300" fill="#2b2b33"/><circle cx="482.100" cy="1041.250" r="14.100" fill="#f5f5f5"/>
<circle cx="482.100" cy="1041.250" r="7.700" fill="#b4123e"/><path d="M482.100,1041.250l-5.400,-5.500a7.700,7.700 0 0 1 10.900,0z" fill="#c92a52"/><path d="M482.100,1041.250l5.400,5.500a7.700,7.700 0 0 1 -10.900,0z" fill="#8e0c30"/><path d="M474.500,1040a7.700,7.700 0 0 1 2.200,-4.300l2.400,2.400z" fill="#e8a0b0"/>
<path d="M529.300,1028.700h41.300l1.400,29.300c0,2 -1.500,3.200 -3.500,3.200h-36.800c-2,0 -3.500,-1.200 -3.500,-3.200z" fill="#f8f8f8"/>
<rect x="529.300" y="1028.700" width="41.300" height="14.600" fill="#e5e5e5"/>
<path d="M529.300,1023a2,2 0 0 1 2,-2h37.300a2,2 0 0 1 2,2v5.750h-41.300z" fill="#d81b1b"/>
<circle cx="536.250" cy="1025.100" r="1.100" fill="#2f7f95"/><circle cx="563.750" cy="1025.100" r="1.100" fill="#2f7f95"/>
<path d="M528.400,1057.500c4,2 40,2 43.400,0" fill="none" stroke="#d9d9d9" stroke-width="0.800"/>
<text x="550.400" y="1052.900" text-anchor="middle" font-family="Liberation Sans, sans-serif" font-size="21.500" fill="#5f5f5f" stroke="#f1f1f1" stroke-width="0.550" textLength="20.500" lengthAdjust="spacingAndGlyphs">31</text>
<path d="M603.9,1019.900h15.3l15.600,16.100v22.600a3,3 0 0 1 -3,3h-27.900a3,3 0 0 1 -3,-3v-35.700a3,3 0 0 1 3,-3z" fill="#4aa4e6"/><path d="M605.2,1022.700h12.9l13,13.500v21.100a1.500,1.500 0 0 1 -1.500,1.500h-25.300a1.500,1.500 0 0 1 -1.500,-1.500v-33.100a1.500,1.500 0 0 1 1.500,-1.500z" fill="#fbfbfb"/><path d="M621.3,1020.300l13.300,13.700v-4.200l-9.200,-9.500z" fill="#1f5f80" opacity="0.550"/><path d="M625.4,1020.400h7.400a2,2 0 0 1 2,2v7.400z" fill="#2c4fa8"/><path d="M607.2,1036.600l12,-2.100v19.250l-12,-2.100z" fill="#49a9e8"/><rect x="619.7" y="1036.600" width="9.200" height="15.100" fill="#49a9e8"/><rect x="620.7" y="1039.6" width="7.200" height="1.100" fill="#eaf4fc"/><rect x="620.7" y="1042.2" width="7.200" height="1.100" fill="#eaf4fc"/><rect x="620.7" y="1044.8" width="7.200" height="1.100" fill="#eaf4fc"/><rect x="620.7" y="1047.4" width="7.200" height="1.100" fill="#eaf4fc"/><rect x="620.7" y="1050.0" width="7.200" height="1.100" fill="#eaf4fc"/><rect x="620.7" y="1037.500" width="7.200" height="1.400" fill="#a9d4f2"/>
<path d="M671.9,1019.900h15.3l15.600,16.100v22.600a3,3 0 0 1 -3,3h-27.900a3,3 0 0 1 -3,-3v-35.700a3,3 0 0 1 3,-3z" fill="#1e9c7a"/><path d="M673.2,1022.700h12.9l13,13.500v21.100a1.500,1.500 0 0 1 -1.500,1.500h-25.300a1.500,1.500 0 0 1 -1.500,-1.500v-33.100a1.500,1.500 0 0 1 1.500,-1.500z" fill="#fbfbfb"/><path d="M689.3,1020.300l13.300,13.700v-4.200l-9.200,-9.500z" fill="#1f5f80" opacity="0.550"/><path d="M693.4,1020.400h7.400a2,2 0 0 1 2,2v7.400z" fill="#15735c"/><path d="M675.2,1036.600l12,-2.100v19.250l-12,-2.100z" fill="#1e9c7a"/><rect x="687.7" y="1036.600" width="9.600" height="15.100" fill="#1e9c7a"/><rect x="688.50" y="1037.50" width="2.200" height="1.900" fill="#f4fbf8"/><rect x="691.50" y="1037.50" width="2.200" height="1.900" fill="#f4fbf8"/><rect x="694.50" y="1037.50" width="2.200" height="1.900" fill="#f4fbf8"/><rect x="688.50" y="1040.40" width="2.200" height="1.900" fill="#f4fbf8"/><rect x="691.50" y="1040.40" width="2.200" height="1.900" fill="#f4fbf8"/><rect x="694.50" y="1040.40" width="2.200" height="1.900" fill="#f4fbf8"/><rect x="688.50" y="1043.30" width="2.200" height="1.900" fill="#f4fbf8"/><rect x="691.50" y="1043.30" width="2.200" height="1.900" fill="#f4fbf8"/><rect x="694.50" y="1043.30" width="2.200" height="1.900" fill="#f4fbf8"/><rect x="688.50" y="1046.20" width="2.200" height="1.900" fill="#f4fbf8"/><rect x="691.50" y="1046.20" width="2.200" height="1.900" fill="#f4fbf8"/><rect x="694.50" y="1046.20" width="2.200" height="1.900" fill="#f4fbf8"/><rect x="688.50" y="1049.10" width="2.200" height="1.900" fill="#f4fbf8"/><rect x="691.50" y="1049.10" width="2.200" height="1.900" fill="#f4fbf8"/><rect x="694.50" y="1049.10" width="2.200" height="1.900" fill="#f4fbf8"/>
<path d="M739.9,1019.900h15.3l15.600,16.100v22.600a3,3 0 0 1 -3,3h-27.900a3,3 0 0 1 -3,-3v-35.700a3,3 0 0 1 3,-3z" fill="#f6821c"/><path d="M741.2,1022.700h12.9l13,13.500v21.100a1.500,1.500 0 0 1 -1.500,1.500h-25.300a1.500,1.500 0 0 1 -1.500,-1.500v-33.100a1.500,1.500 0 0 1 1.500,-1.500z" fill="#fbfbfb"/><path d="M757.3,1020.300l13.300,13.700v-4.200l-9.200,-9.500z" fill="#1f5f80" opacity="0.550"/><path d="M761.4,1020.400h7.400a2,2 0 0 1 2,2v7.400z" fill="#e84a5c"/><path d="M743.2,1036.600l12,-2.100v19.250l-12,-2.100z" fill="#ff8a14"/><rect x="755.7" y="1037.600" width="9.600" height="12.100" fill="#ffb066"/><rect x="756.2" y="1038.600" width="7.600" height="10.100" fill="#fde3c8"/><circle cx="759.2" cy="1041.600" r="1.900" fill="#ff8a14"/><rect x="757.2" y="1045.200" width="5.600" height="0.900" fill="#ff8a14"/><rect x="757.2" y="1047" width="5.600" height="0.900" fill="#ff8a14"/>
<rect x="801.800" y="1019.900" width="40.100" height="41.700" rx="3" fill="#e2e2e2"/><rect x="801.800" y="1019.900" width="40.100" height="40" rx="3" fill="#fbfbfb"/>
<circle cx="822.100" cy="1040.200" r="18.200" fill="#3d3d3d"/><circle cx="822.100" cy="1040.200" r="14" fill="none" stroke="#474747" stroke-width="0.800"/><circle cx="822.100" cy="1040.200" r="10.500" fill="none" stroke="#474747" stroke-width="0.800"/><circle cx="822.100" cy="1040.200" r="7.600" fill="#595650"/><circle cx="822.100" cy="1040.200" r="5.700" fill="#27aeca"/>
<g fill="#7fdcea"><circle cx="820.500" cy="1038.500" r="0.600"/><circle cx="823.500" cy="1038.500" r="0.600"/><circle cx="820.500" cy="1041.800" r="0.600"/><circle cx="823.500" cy="1041.800" r="0.600"/><circle cx="822.100" cy="1040.200" r="0.600"/></g>
<circle cx="805.500" cy="1024.600" r="2.900" fill="#3a9fe8"/><path d="M805.700,1025c0.500,6 1.500,11 2.800,16.250c1,3.500 4,6 8,7.500" fill="none" stroke="#3a9fe8" stroke-width="1.900" stroke-linecap="round"/>
<rect x="868.700" y="1021.700" width="42.200" height="38.500" rx="2.600" fill="#181818" stroke="#fbfbfb" stroke-width="1.800"/>
<text x="873.200" y="1040.500" font-family="Liberation Mono, DejaVu Sans Mono, monospace" font-weight="bold" font-size="15.500" fill="#f4f4f4" textLength="15.500" lengthAdjust="spacingAndGlyphs">$_</text>
<rect x="938.500" y="1022.300" width="38.800" height="38.900" rx="3.200" fill="#1f1f22" stroke="#f2f2f2" stroke-width="1.700"/>
<rect x="940.800" y="1024.600" width="34.400" height="34.400" fill="#2b3242"/>
<path d="M940.800,1043c2,-2.500 3.500,-1.500 5,-2c2.500,-1 4,-2.300 6.500,-2.300c2.500,0 3.500,-1.500 6,-1.800c2.500,-0.300 3.500,-1.800 6,-2c3,-0.300 4,-1.700 6,-2.200c1.800,-0.400 3.200,0.300 4.900,-0.200v26.500h-34.400z" fill="#f1d559"/>
<path d="M940.800,1053.500c2,-0.500 3,0.500 4.500,-1.500c1.500,-2 2,-4.500 4,-5.500c2,-1 3,-2.500 5.500,-3c2.500,-0.500 4,0.500 6,-1c2,-1.500 3.500,-3 6,-3.300c2.500,-0.300 5,-0.200 8.400,-0.700v20.500h-34.400z" fill="#1e9b80"/>
<path d="M940.800,1056.300c2,-0.300 3.500,-1 5,-2.800c1.500,-1.800 3,-4.500 5,-5.500c2,-1 4,-1 6,-2.500c2,-1.500 4,-3.200 6.500,-3.700c2.500,-0.500 4,0.200 6,-0.500c2,-0.700 3.500,-0.300 5.900,-0.500v18.200h-34.400z" fill="#4cc9cd"/>
</g><rect x="993" y="1016" width="1" height="48" fill="#fff" opacity="0.220"/><g filter="url(#ds)">
<path d="M1014.500,1020h19.400l11.900,12v27.700a2,2 0 0 1 -2,2h-29.300a2,2 0 0 1 -2,-2v-37.700a2,2 0 0 1 2,-2z" fill="#fbfbfb"/>
<path d="M1033.900,1020l11.900,12h-9.500a2.400,2.400 0 0 1 -2.400,-2.400z" fill="#d9d9d9"/><path d="M1033.900,1020l11.900,12l-8,-5z" fill="#ececec"/>
<circle cx="1042" cy="1052.900" r="11.200" fill="#d81a1a"/>
<path d="M1036.300,1057.700l0.500,-3l6.200,-6.200l2.500,2.500l-6.200,6.200zM1043.900,1047.600l1.100,-1.100a1,1 0 0 1 1.400,0l1.100,1.100a1,1 0 0 1 0,1.400l-1.100,1.100z" fill="#fdfdfd"/>
<path d="M1100.00,1026.54 L1102.09,1023.06 L1105.49,1024.47 L1104.51,1028.41 L1108.89,1032.79 L1112.83,1031.81 L1114.24,1035.21 L1110.76,1037.30 L1110.76,1043.50 L1114.24,1045.59 L1112.83,1048.99 L1108.89,1048.01 L1104.51,1052.39 L1105.49,1056.33 L1102.09,1057.74 L1100.00,1054.26 L1093.80,1054.26 L1091.71,1057.74 L1088.31,1056.33 L1089.29,1052.39 L1084.91,1048.01 L1080.97,1048.99 L1079.56,1045.59 L1083.04,1043.50 L1083.04,1037.30 L1079.56,1035.21 L1080.97,1031.81 L1084.91,1032.79 L1089.29,1028.41 L1088.31,1024.47 L1091.71,1023.06 L1093.80,1026.54Z" fill="#f4f4f4" stroke="#f4f4f4" stroke-width="4.400" stroke-linejoin="round"/>
<circle cx="1096.900" cy="1040.400" r="14.800" fill="#f4f4f4"/>
<circle cx="1096.900" cy="1040.900" r="7.200" fill="#d9d9d9"/><circle cx="1096.900" cy="1040.300" r="6.300" fill="#ededed"/>
<path d="M1149.9,1019.900h30.400a2,2 0 0 1 2,2v37.500a2.800,2.800 0 0 1 -2.800,2.800h-28.800a2.800,2.800 0 0 1 -2.800,-2.800v-37.500a2,2 0 0 1 2,-2z" fill="#111"/>
<path d="M1150.5,1020.700h29.200a1.600,1.600 0 0 1 1.600,1.600v33.700h-32.400v-33.700a1.600,1.600 0 0 1 1.600,-1.600z" fill="#fcfcfc"/>
<circle cx="1165.1" cy="1038.100" r="8.800" fill="none" stroke="#0c0c0c" stroke-width="2.200"/>
<rect x="1150.1" y="1058" width="15" height="2" rx="0.600" fill="#fff"/><circle cx="1174.6" cy="1059" r="0.900" fill="#fff"/><circle cx="1177.7" cy="1059" r="0.900" fill="#fff"/>
<path d="M1217.9,1019.900h30.400a2,2 0 0 1 2,2v37.500a2.800,2.800 0 0 1 -2.800,2.800h-28.800a2.800,2.800 0 0 1 -2.800,-2.800v-37.500a2,2 0 0 1 2,-2z" fill="#111"/>
<path d="M1218.5,1020.700h29.200a1.600,1.600 0 0 1 1.600,1.600v33.700h-32.400v-33.700a1.600,1.600 0 0 1 1.600,-1.600z" fill="#fcfcfc"/>
<circle cx="1233.1" cy="1038.100" r="8.800" fill="none" stroke="#0c0c0c" stroke-width="2.200"/>
<rect x="1218.1" y="1058" width="15" height="2" rx="0.600" fill="#fff"/><circle cx="1242.6" cy="1059" r="0.900" fill="#fff"/><circle cx="1245.7" cy="1059" r="0.900" fill="#fff"/>
<path d="M1285.9,1019.900h30.400a2,2 0 0 1 2,2v37.500a2.800,2.800 0 0 1 -2.800,2.800h-28.800a2.800,2.800 0 0 1 -2.800,-2.800v-37.500a2,2 0 0 1 2,-2z" fill="#111"/>
<path d="M1286.5,1020.700h29.200a1.600,1.600 0 0 1 1.600,1.600v33.700h-32.400v-33.700a1.600,1.600 0 0 1 1.600,-1.600z" fill="#fcfcfc"/>
<circle cx="1301.1" cy="1038.100" r="8.800" fill="none" stroke="#0c0c0c" stroke-width="2.200"/>
<rect x="1286.1" y="1058" width="15" height="2" rx="0.600" fill="#fff"/><circle cx="1310.6" cy="1059" r="0.900" fill="#fff"/><circle cx="1313.7" cy="1059" r="0.900" fill="#fff"/>
<path d="M1353.9,1019.900h30.400a2,2 0 0 1 2,2v37.500a2.800,2.800 0 0 1 -2.800,2.800h-28.800a2.800,2.800 0 0 1 -2.800,-2.800v-37.500a2,2 0 0 1 2,-2z" fill="#111"/>
<path d="M1354.5,1020.700h29.200a1.600,1.600 0 0 1 1.600,1.600v33.700h-32.400v-33.700a1.600,1.600 0 0 1 1.600,-1.600z" fill="#fcfcfc"/>
<circle cx="1369.1" cy="1038.100" r="8.800" fill="none" stroke="#0c0c0c" stroke-width="2.200"/>
<rect x="1354.1" y="1058" width="15" height="2" rx="0.600" fill="#fff"/><circle cx="1378.6" cy="1059" r="0.900" fill="#fff"/><circle cx="1381.7" cy="1059" r="0.900" fill="#fff"/>
<path d="M1421.9,1019.900h30.400a2,2 0 0 1 2,2v37.500a2.800,2.800 0 0 1 -2.800,2.800h-28.800a2.800,2.800 0 0 1 -2.800,-2.800v-37.500a2,2 0 0 1 2,-2z" fill="#111"/>
<path d="M1422.5,1020.700h29.200a1.600,1.600 0 0 1 1.600,1.600v33.700h-32.400v-33.700a1.600,1.600 0 0 1 1.600,-1.600z" fill="#fcfcfc"/>
<circle cx="1437.1" cy="1038.100" r="8.800" fill="none" stroke="#0c0c0c" stroke-width="2.200"/>
<rect x="1422.1" y="1058" width="15" height="2" rx="0.600" fill="#fff"/><circle cx="1446.6" cy="1059" r="0.900" fill="#fff"/><circle cx="1449.7" cy="1059" r="0.900" fill="#fff"/>
<path d="M1489.9,1019.900h30.400a2,2 0 0 1 2,2v37.500a2.800,2.800 0 0 1 -2.800,2.800h-28.800a2.800,2.800 0 0 1 -2.800,-2.800v-37.500a2,2 0 0 1 2,-2z" fill="#111"/>
<path d="M1490.5,1020.700h29.200a1.600,1.600 0 0 1 1.600,1.600v33.700h-32.400v-33.700a1.600,1.600 0 0 1 1.600,-1.600z" fill="#fcfcfc"/>
<circle cx="1505.1" cy="1038.100" r="8.800" fill="none" stroke="#0c0c0c" stroke-width="2.200"/>
<rect x="1490.1" y="1058" width="15" height="2" rx="0.600" fill="#fff"/><circle cx="1514.6" cy="1059" r="0.900" fill="#fff"/><circle cx="1517.7" cy="1059" r="0.900" fill="#fff"/>
<path d="M1555,1026.700l5.300,30.800c0.500,2.500 6,4.300 12.800,4.300s12.300,-1.800 12.800,-4.300l5.300,-30.800z" fill="#e6e6e6"/><ellipse cx="1573.100" cy="1026.700" rx="18.100" ry="6.600" fill="#ececec"/><ellipse cx="1573.100" cy="1027.200" rx="16.400" ry="5.500" fill="#d5d5d5"/>
</g></svg>
</body>
</html>
